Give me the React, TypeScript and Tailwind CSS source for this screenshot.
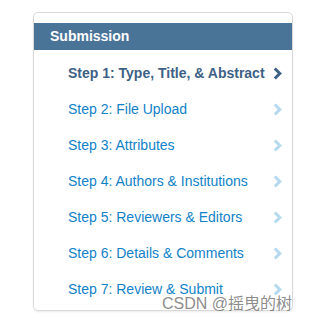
import React from 'react';

const STEPS = [
  'Step 1: Type, Title, & Abstract',
  'Step 2: File Upload',
  'Step 3: Attributes',
  'Step 4: Authors & Institutions',
  'Step 5: Reviewers & Editors',
  'Step 6: Details & Comments',
  'Step 7: Review & Submit',
];

const Chevron = ({ active }: { active: boolean }) => (
  <svg width="9" height="13" viewBox="0 0 9 13" className="shrink-0">
    <polyline
      points="1.8,1.5 6.8,6.5 1.8,11.5"
      fill="none"
      stroke={active ? '#3d6185' : '#b5d9f0'}
      strokeWidth="3"
    />
  </svg>
);

const App: React.FC = () => {
  const current = 0;

  return (
    <div className="relative w-[313px] h-[324px] bg-white font-['Liberation_Sans',Arial,sans-serif]">
      <div className="absolute left-[33px] top-[12px] w-[260px] h-[299px] rounded-[5px] border border-[#d9d9d9] shadow-[0_1px_2px_rgba(0,0,0,0.08)] pt-[10px]">
        <div className="h-[27px] bg-[#4a7398] flex items-center pl-[16px] text-white text-[14px] font-bold">
          Submission
        </div>
        <ul className="mt-[5px]">
          {STEPS.map((s, i) => (
            <li key={s} className="h-[36px] flex items-center justify-between pl-[34px] pr-[10px]">
              <span
                className={
                  i === current
                    ? 'text-[14px] font-bold text-[#3d6185]'
                    : 'text-[14px] text-[#1182c8]'
                }
              >
                {s}
              </span>
              <Chevron active={i === current} />
            </li>
          ))}
        </ul>
      </div>
      <div className="absolute left-[162px] top-[294px] text-[16px] leading-[20px] text-[#7d7d7d]/90 font-['Liberation_Sans','Noto_Sans_CJK_SC',sans-serif]">
        CSDN @摇曳的树
      </div>
    </div>
  );
};

export default App;
